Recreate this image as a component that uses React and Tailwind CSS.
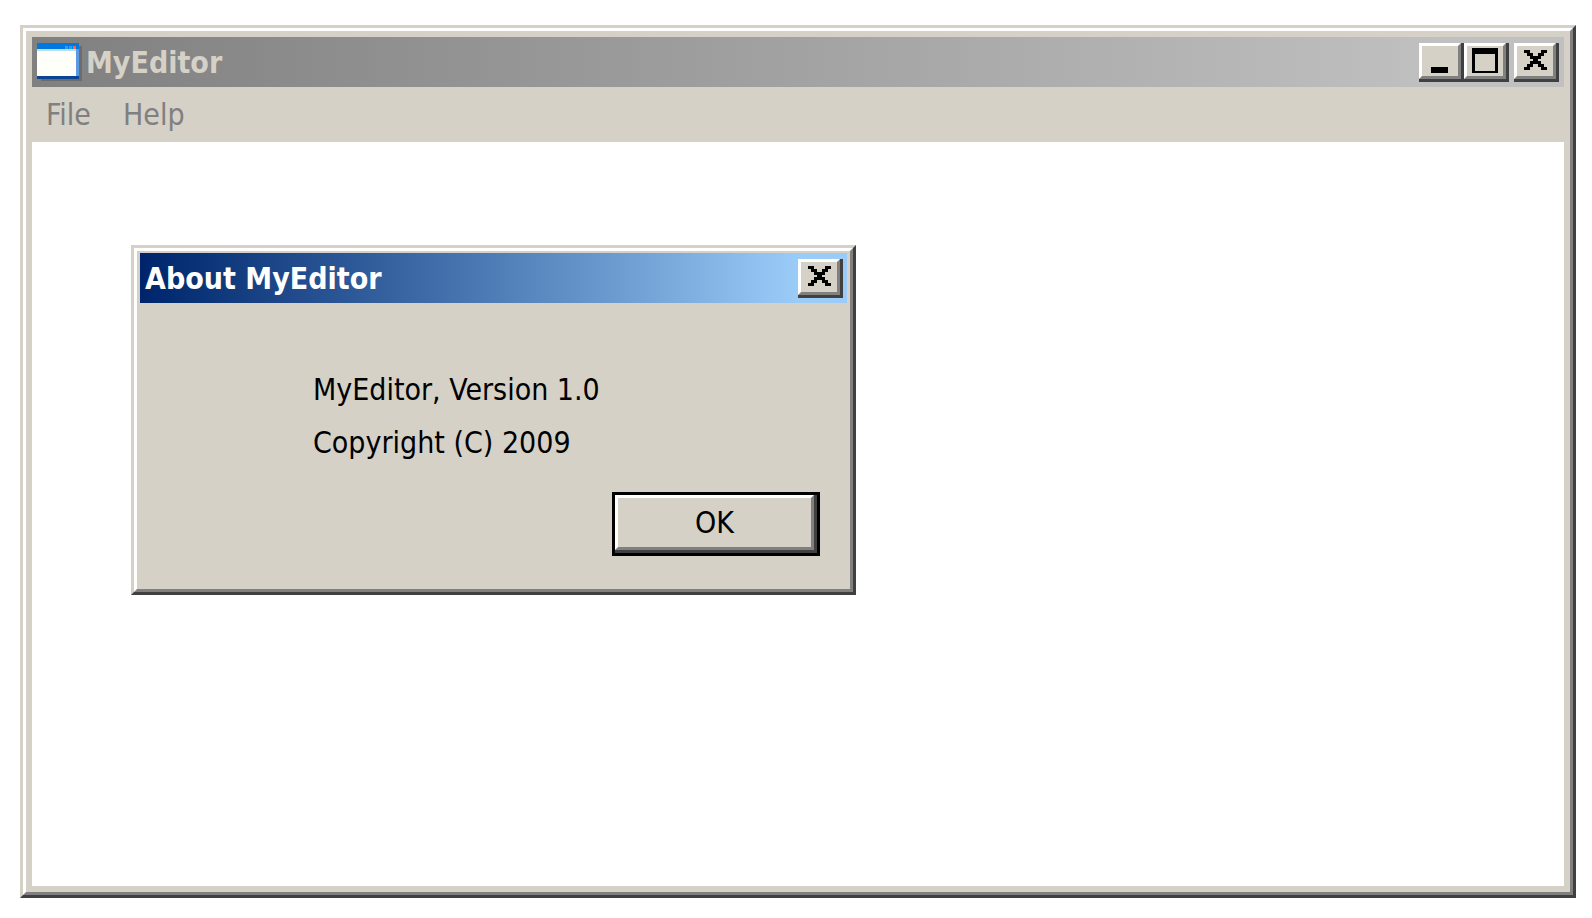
const glyphs = {
  minimize: (
    <path d="M4 19h17v6H4z" />
  ),
  maximize: (
    <path fillRule="evenodd" d="M0 0h26v25H0zM3 6h20v17H3z" />
  ),
  close: (
    <path
      transform="translate(2 2) scale(2.85)"
      d="M0 0h2v1h1v1h2V1h1V0h2v1H7v1H6v1H5v1h1v1h1v1h1v1H6V6H5V5H3v1H2v1H0V6h1V5h1V4h1V3H2V2H1V1H0z"
    />
  ),
}

function Glyph({ name }) {
  return (
    <svg width="26" height="25" viewBox="0 0 26 25" shapeRendering="crispEdges" aria-hidden="true">
      {glyphs[name]}
    </svg>
  )
}

// Raised edge: light top-left, two-step shadow bottom-right
function CaptionButton({ name, label }) {
  return (
    <button
      aria-label={label}
      className="flex h-[39px] w-[45px] shrink-0 border-r-3 border-b-3 border-[#404040] bg-[#d5d1c7]"
    >
      <span className="flex h-full w-full items-center justify-center border-3 border-t-white border-l-white border-r-[#808080] border-b-[#808080]">
        <Glyph name={name} />
      </span>
    </button>
  )
}

function AppIcon() {
  return (
    <svg width="46" height="38" viewBox="0 0 46 38" aria-hidden="true">
      <path d="M4 3h41v35H4z" fill="#6c6c70" />
      <path d="M0 0h42v36H0z" fill="#5a9ae0" />
      <path d="M0 0h42v6H0z" fill="#0078e0" />
      <path d="M28 3h3v3h-3zM32 3h3v3h-3z" fill="#2c9cf0" />
      <path d="M36 3h3v3h-3z" fill="#f46c3c" />
      <path d="M0 6h39v2H0z" fill="#b4e0f0" />
      <path d="M0 8h39v25H0z" fill="#fffffa" />
      <path d="M0 33h42v3H0z" fill="#0c4494" />
    </svg>
  )
}

function AboutDialog() {
  return (
    <div
      role="dialog"
      aria-labelledby="about-title"
      className="absolute top-[103px] left-[99px] w-[725px] border-3 border-t-[#d5d1c7] border-l-[#d5d1c7] border-r-[#404040] border-b-[#404040] bg-[#d5d1c7]"
    >
      <div className="h-[344px] border-3 border-t-white border-l-white border-r-[#808080] border-b-[#808080] px-[3px] pt-[2px]">
        <div className="flex h-[50px] items-center justify-between bg-linear-to-r from-[#00246b] to-[#9bccf8] to-93% pr-[4px] pl-[5px]">
          <h2 id="about-title" className="pt-[2px] text-[30px] leading-9 font-bold text-white">
            About MyEditor
          </h2>
          <CaptionButton name="close" label="Close dialog" />
        </div>
        <div className="pt-[60px] pl-[173px] text-[30px] leading-[53px]">
          <p>MyEditor, Version 1.0</p>
          <p>Copyright (C) 2009</p>
        </div>
        <div className="flex justify-end pt-[23px] pr-[27px]">
          <button className="h-[64px] w-[208px] border-3 border-black bg-[#d5d1c7]">
            <span className="flex h-full border-r-3 border-b-3 border-[#404040]">
              <span className="flex flex-1 items-center justify-center border-3 border-t-white border-l-white border-r-[#808080] border-b-[#808080] text-[30px] leading-9">
                OK
              </span>
            </span>
          </button>
        </div>
      </div>
    </div>
  )
}

export default function App() {
  return (
    <div className="flex h-screen bg-white pt-[25px] pr-4 pb-5 pl-5 font-['DejaVu_Sans_Condensed','Noto_Sans',sans-serif] text-black">
      <div className="flex flex-1 border-3 border-t-[#d5d1c7] border-l-[#d5d1c7] border-r-[#404040] border-b-[#404040]">
        <div className="flex flex-1 flex-col border-3 border-t-white border-l-white border-r-[#808080] border-b-[#808080] bg-[#d5d1c7] p-[6px]">
          <header className="flex h-[50px] shrink-0 items-center bg-linear-to-r from-[#808080] to-[#c0c0c0] to-92% pr-[5px] pl-[5px]">
            <AppIcon />
            <h1 className="ml-[3px] flex-1 pt-[2px] text-[30px] leading-9 font-bold text-[#d5d1c7]">MyEditor</h1>
            <CaptionButton name="minimize" label="Minimize" />
            <CaptionButton name="maximize" label="Maximize" />
            <div className="ml-[5px] flex">
              <CaptionButton name="close" label="Close" />
            </div>
          </header>
          <nav className="flex h-[55px] shrink-0 items-center gap-8 pl-[14px] text-[30px] leading-9 text-[#808080]">
            <button>File</button>
            <button>Help</button>
          </nav>
          <main className="relative flex flex-1 bg-white">
            <textarea
              aria-label="Document text"
              className="flex-1 resize-none bg-white p-2 text-[30px] outline-none"
            />
            <AboutDialog />
          </main>
        </div>
      </div>
    </div>
  )
}
